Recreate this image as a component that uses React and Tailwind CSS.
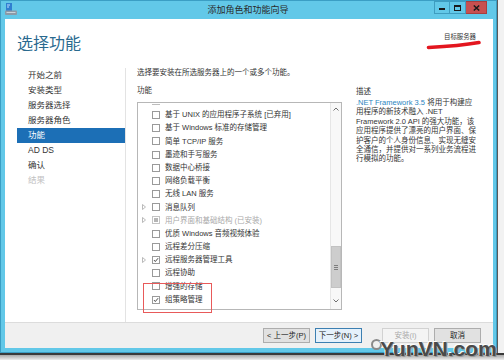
import React from 'react';

const features = [
  { label: '基于 UNIX 的应用程序子系统 [已弃用]' },
  { label: '基于 Windows 标准的存储管理' },
  { label: '简单 TCP/IP 服务' },
  { label: '墨迹和手写服务' },
  { label: '数据中心桥接' },
  { label: '网络负载平衡' },
  { label: '无线 LAN 服务' },
  { label: '消息队列', expand: true },
  { label: '用户界面和基础结构 (已安装)', expand: true, installed: true },
  { label: '优质 Windows 音频视频体验' },
  { label: '远程差分压缩' },
  { label: '远程服务器管理工具', expand: true, checked: true },
  { label: '远程协助' },
  { label: '增强的存储' },
  { label: '组策略管理', checked: true },
];

const steps = ['开始之前', '安装类型', '服务器选择', '服务器角色', '功能', 'AD DS', '确认', '结果'];

const descLines = [
  null,
  '用程序的新技术融入 .NET',
  'Framework 2.0 API 的强大功能，该',
  '应用程序提供了漂亮的用户界面、保',
  '护客户的个人身份信息、实现无缝安',
  '全通信，并提供对一系列业务流程进',
  '行模拟的功能。',
];

const Checkbox = ({ checked, installed }) => {
  if (installed) {
    return (
      <span className="w-[8px] h-[8px] border border-[#c4c4c4] flex items-center justify-center shrink-0">
        <span className="w-[4px] h-[4px] bg-[#b5b5b5]" />
      </span>
    );
  }
  return (
    <span className="w-[8px] h-[8px] border border-[#9a9a9a] bg-white flex items-center justify-center shrink-0">
      {checked && (
        <svg width="8" height="8" viewBox="0 0 8 8">
          <path d="M1.3 4.1 L3.1 6 L6.8 1.6" fill="none" stroke="#222" strokeWidth="1.1" />
        </svg>
      )}
    </span>
  );
};

const Expander = () => (
  <svg width="4" height="6" viewBox="0 0 4 6">
    <path d="M0.5 0.5 L3.5 3 L0.5 5.5 Z" fill="none" stroke="#a8a8a8" strokeWidth="0.8" />
  </svg>
);

const Chevron = ({ up }) => (
  <svg width="6" height="4" viewBox="0 0 6 4">
    <path d={up ? 'M0.5 3.5 L3 1 L5.5 3.5' : 'M0.5 0.5 L3 3 L5.5 0.5'} fill="none" stroke="#606060" strokeWidth="0.9" />
  </svg>
);

const WizardButton = ({ children, variant, className = '' }) => {
  const styles = {
    normal: 'bg-[#e1e1e1] border-[#adadad] text-[#222]',
    focused: 'bg-[#e5f1fb] border-[#3c7fb1] text-[#222]',
    disabled: 'bg-[#f4f4f4] border-[#d2d2d2] text-[#a8a8a8]',
  };
  return (
    <div className={`w-[47px] h-[15px] border text-[7.5px] leading-none flex items-center justify-center whitespace-nowrap ${styles[variant]} ${className}`}>
      {children}
    </div>
  );
};

export default function App() {
  return (
    <div className="relative w-[504px] h-[360px] overflow-hidden bg-white font-['Liberation_Sans','Noto_Sans_CJK_SC',sans-serif] text-[#333]">
      <div className="flex h-[353px]">
        {/* window */}
        <div className="w-[497px] h-[353px] bg-[#62c8e8] border border-[#3b9ec4] pl-[4px] pr-[3px] pb-[4px] flex flex-col">
          {/* title bar */}
          <div className="h-[18px] flex items-start">
            <div className="w-[62px] pt-[2px]">
              <svg width="12" height="12" viewBox="0 0 12 12">
                <rect x="1" y="0" width="6" height="8" fill="#2f7fd0" />
                <rect x="2" y="1.5" width="3" height="1" fill="#bfe0ff" />
                <rect x="2" y="3.5" width="2" height="1" fill="#bfe0ff" />
                <rect x="0" y="7.5" width="12" height="4.5" rx="1" fill="#8b9aa7" />
                <rect x="1.5" y="9" width="9" height="1" fill="#c9d3db" />
              </svg>
            </div>
            <div className="flex-1 text-center text-[9px] leading-[18px] text-[#2a2a2a]">添加角色和功能向导</div>
            <div className="w-[64px] flex justify-end pr-[6px]">
              <div className="w-[16px] h-[13px] border border-[#3e9dc0] flex items-end justify-center pb-[3px]">
                <span className="w-[6px] h-[2px] bg-[#1a1a1a]" />
              </div>
              <div className="w-[16px] h-[13px] border border-l-0 border-[#3e9dc0] flex items-center justify-center">
                <span className="w-[7px] h-[6px] border border-t-2 border-[#1a1a1a]" />
              </div>
              <div className="w-[21px] h-[13px] bg-[#c75050] border border-l-0 border-[#a83e3e] flex items-center justify-center">
                <svg width="7" height="6" viewBox="0 0 7 6">
                  <path d="M0.8 0.5 L6.2 5.5 M6.2 0.5 L0.8 5.5" stroke="#1a1a1a" strokeWidth="1.5" />
                </svg>
              </div>
            </div>
          </div>

          {/* content */}
          <div className="flex-1 bg-white flex flex-col">
            {/* header */}
            <div className="h-[49px] flex justify-between">
              <div className="pl-[12px] pt-[15px] text-[16px] leading-[20px] text-[#2a6a8f]">选择功能</div>
              <div className="pr-[17px] pt-[14px] text-[6.4px] leading-[8px] text-[#333]">目标服务器</div>
            </div>

            {/* main */}
            <div className="h-[254px] flex">
              <div className="w-[121px] border-r border-[#e3e3e3] flex flex-col">
                {steps.map((s, i) => (
                  <div
                    key={s}
                    className={`h-[15px] ml-[12px] pl-[11px] text-[8.5px] leading-[15px] whitespace-nowrap ${
                      i === 4 ? 'bg-[#1c6fb6] text-white' : i === 7 ? 'text-[#c2c2c2]' : 'text-[#333]'
                    }`}
                  >
                    {s}
                  </div>
                ))}
              </div>

              <div className="flex-1 flex pl-[11px]">
                <div className="w-[205px] flex flex-col">
                  <div className="h-[10px] text-[7.5px] leading-[10px] whitespace-nowrap">选择要安装在所选服务器上的一个或多个功能。</div>
                  <div className="mt-[8px] h-[10px] text-[7.5px] leading-[10px]">功能</div>
                  <div className="mt-[6px] h-[208px] border border-[#b7b7b7] flex">
                    <div className="flex-1 flex flex-col pt-[1px] overflow-hidden">
                      <div className="ml-[14px] w-[8px] h-[1px] bg-[#bdbdbd]" />
                      <div className="h-[3.4px]" />
                      {features.map((f) => (
                        <div key={f.label} className="h-[13.2px] shrink-0 flex items-center">
                          <span className="w-[14px] pl-[4px] flex items-center">{f.expand && <Expander />}</span>
                          <Checkbox checked={f.checked} installed={f.installed} />
                          <span className={`ml-[5px] text-[7.5px] leading-none whitespace-nowrap ${f.installed ? 'text-[#a8a8a8]' : 'text-[#333]'}`}>
                            {f.label}
                          </span>
                        </div>
                      ))}
                    </div>
                    <div className="w-[11px] border-l border-[#e6e6e6] bg-[#f8f8f8] flex flex-col">
                      <div className="h-[12px] flex items-center justify-center">
                        <Chevron up />
                      </div>
                      <div className="flex-1 flex flex-col justify-end pb-[5px]">
                        <div className="h-[42px] bg-[#cdcdcd] border border-[#c2c2c2] flex flex-col items-center justify-center gap-[1px]">
                          <span className="w-[4px] h-[1px] bg-[#7d7d7d]" />
                          <span className="w-[4px] h-[1px] bg-[#7d7d7d]" />
                          <span className="w-[4px] h-[1px] bg-[#7d7d7d]" />
                        </div>
                      </div>
                      <div className="h-[16px] flex items-center justify-center">
                        <Chevron />
                      </div>
                    </div>
                  </div>
                </div>

                <div className="ml-[14px] pt-[19px] flex flex-col text-[7.5px]">
                  <div className="h-[10px] leading-[10px]">描述</div>
                  <div className="mt-[1px] flex flex-col leading-[9.4px] whitespace-nowrap">
                    {descLines.map((l, i) =>
                      l === null ? (
                        <div key={i}>
                          <span className="text-[#2b86c0]">.NET Framework 3.5</span> 将用于构建应
                        </div>
                      ) : (
                        <div key={i}>{l}</div>
                      )
                    )}
                  </div>
                </div>
              </div>
            </div>

            {/* button bar */}
            <div className="h-[26px] bg-[#f0f0f0] border-t border-[#dcdcdc] flex justify-end items-start pt-[5px] pr-[12px]">
              <WizardButton variant="normal">&lt; 上一步(P)</WizardButton>
              <WizardButton variant="focused" className="ml-[5px]">下一步(N) &gt;</WizardButton>
              <WizardButton variant="disabled" className="ml-[20px]">安装(I)</WizardButton>
              <WizardButton variant="normal" className="ml-[5px]">取消</WizardButton>
            </div>
          </div>
        </div>
        <div className="flex-1 border-l border-[#5a5a5a] bg-[#f2f2f2]" />
      </div>
      <div className="h-[7px] border-t-2 border-[#3a3a3a] bg-gradient-to-b from-[#a8a8a8] to-[#eeeeee]" />

      {/* annotations over the screenshot */}
      <svg className="absolute left-[426px] top-[40px]" width="56" height="10" viewBox="0 0 56 10">
        <path d="M2.5 7.5 C 16 6.8, 36 5.5, 53 2.5" fill="none" stroke="#e3161f" strokeWidth="3.6" strokeLinecap="round" />
      </svg>
      <div className="absolute left-[143px] top-[283px] w-[69px] h-[30px] border border-[#e85a5a]" />
      <div className="absolute left-[371px] top-[339px] w-[11px] h-[11px] rounded-full border-2 border-[#8a8a8a]" />
      <div className="absolute left-[380px] top-[338px] text-[21px] leading-none font-bold font-['Liberation_Sans',sans-serif] text-[#4a4a4a] [text-shadow:-1px_-1px_0_#ffffff,1px_1px_0_#9a9a9a]">
        YunVN.com
      </div>
    </div>
  );
}
